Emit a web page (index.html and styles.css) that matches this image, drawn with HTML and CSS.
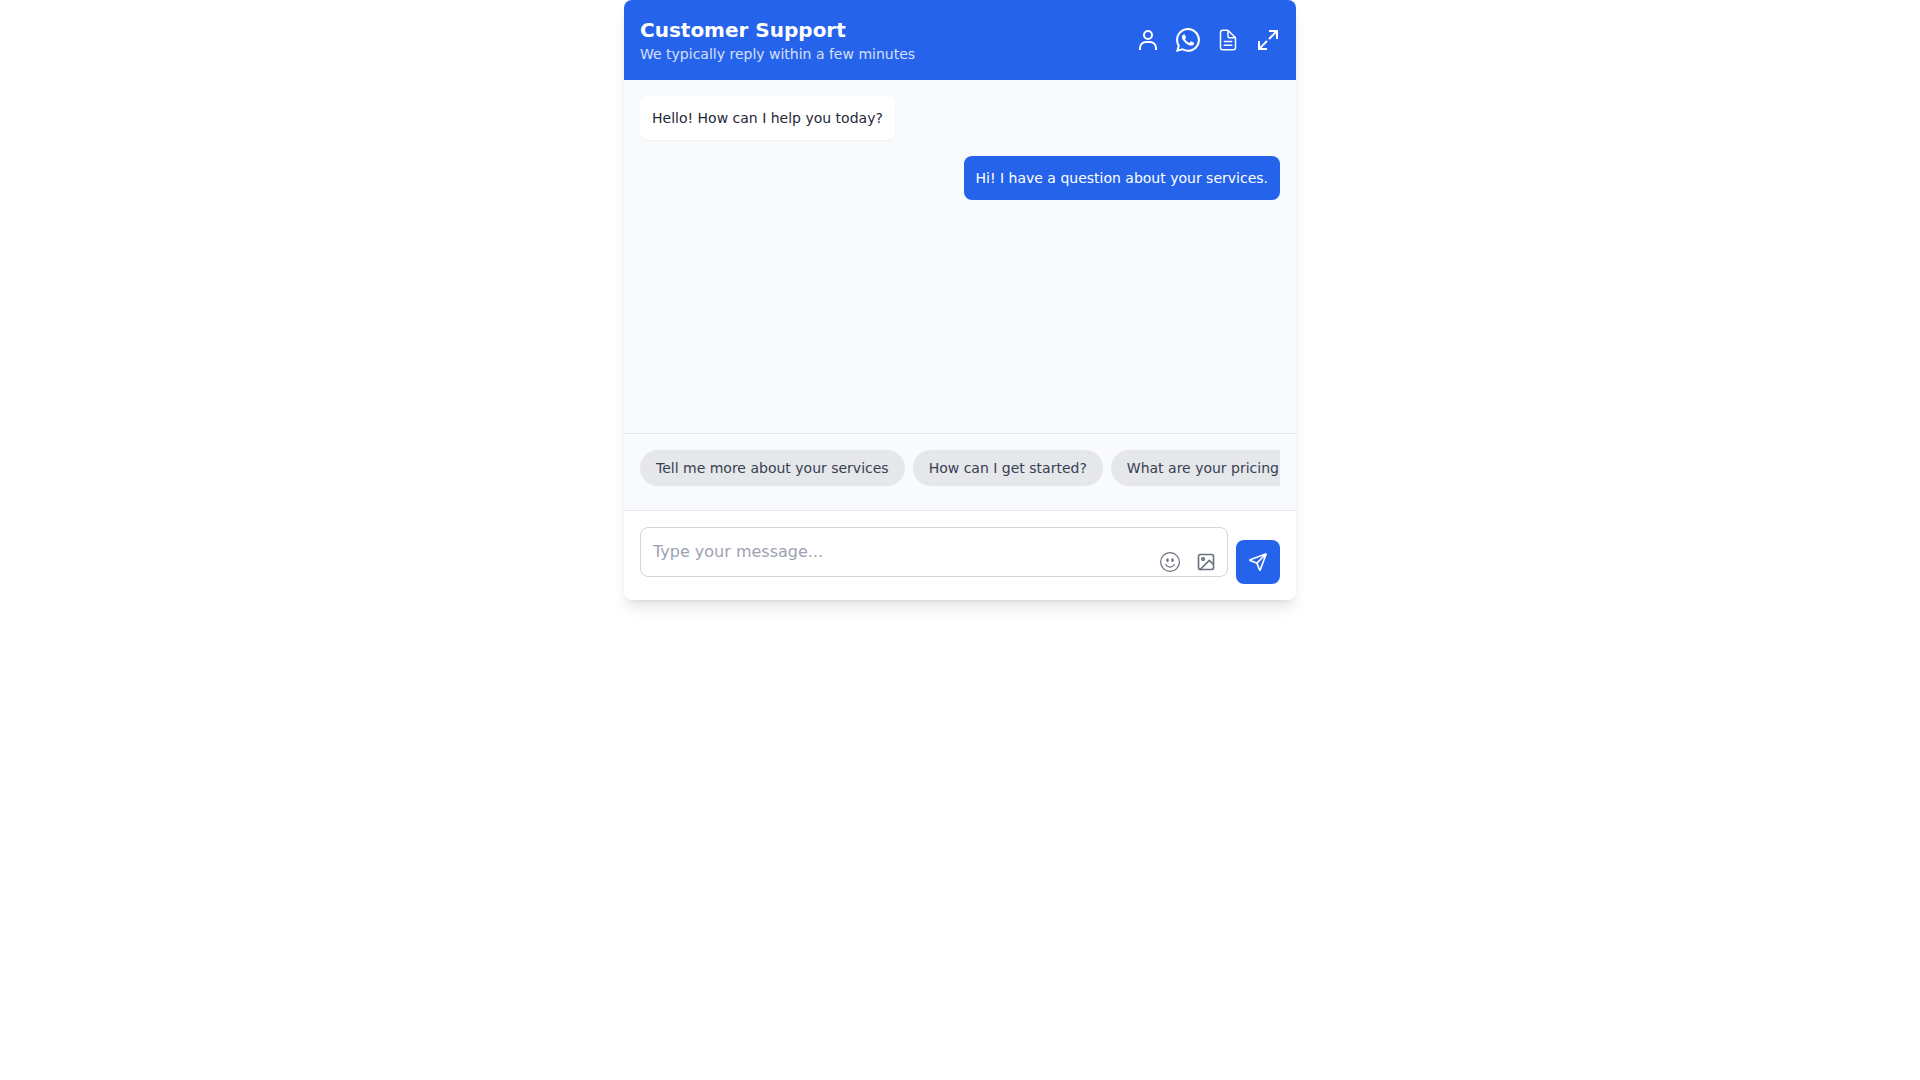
FILE: index.html
```
<!DOCTYPE html>
<html lang="en">
<head>
  <meta charset="UTF-8">
  <meta name="viewport" content="width=device-width, initial-scale=1.0">
  <title>Customer Support</title>
  <link rel="stylesheet" href="styles.css">
</head>
<body>
  <main class="chat">
    <header class="chat-header">
      <div>
        <h1>Customer Support</h1>
        <p>We typically reply within a few minutes</p>
      </div>
      <div class="header-actions">
        <button type="button" aria-label="Contact details">
          <svg viewBox="0 0 24 24" fill="currentColor"><path d="M12 2a5 5 0 1 0 5 5 5 5 0 0 0-5-5zm0 8a3 3 0 1 1 3-3 3 3 0 0 1-3 3zm9 12v-2a7 7 0 0 0-7-7h-4a7 7 0 0 0-7 7v2h2v-2a5 5 0 0 1 5-5h4a5 5 0 0 1 5 5v2z"/></svg>
        </button>
        <button type="button" aria-label="WhatsApp">
          <svg viewBox="0 0 16 16" fill="currentColor"><path d="M13.601 2.326A7.85 7.85 0 0 0 7.994 0C3.627 0 .068 3.558.064 7.926c0 1.399.366 2.76 1.057 3.965L0 16l4.204-1.102a7.9 7.9 0 0 0 3.79.965h.004c4.368 0 7.926-3.558 7.93-7.93A7.9 7.9 0 0 0 13.6 2.326zM7.994 14.521a6.6 6.6 0 0 1-3.356-.92l-.24-.144-2.494.654.666-2.433-.156-.251a6.56 6.56 0 0 1-1.007-3.505c0-3.626 2.957-6.584 6.591-6.584a6.56 6.56 0 0 1 4.66 1.931 6.557 6.557 0 0 1 1.928 4.66c-.004 3.639-2.961 6.592-6.592 6.592m3.615-4.934c-.197-.099-1.17-.578-1.353-.646-.182-.065-.315-.099-.445.099-.133.197-.513.646-.627.775-.114.133-.232.148-.43.05-.197-.1-.836-.308-1.592-.985-.59-.525-.985-1.175-1.103-1.372-.114-.198-.011-.304.088-.403.087-.088.197-.232.296-.346.1-.114.133-.198.198-.33.065-.134.034-.248-.015-.347-.05-.099-.445-1.076-.612-1.47-.16-.389-.323-.335-.445-.34-.114-.007-.247-.007-.38-.007a.73.73 0 0 0-.529.247c-.182.198-.691.677-.691 1.654s.71 1.916.81 2.049c.098.133 1.394 2.132 3.383 2.992.47.205.84.326 1.129.418.475.152.904.129 1.246.08.38-.058 1.171-.48 1.338-.943.164-.464.164-.86.114-.943-.049-.084-.182-.133-.38-.232"/></svg>
        </button>
        <button type="button" aria-label="Transcript">
          <svg viewBox="0 0 512 512" fill="none" stroke="currentColor" stroke-width="32" stroke-linecap="round" stroke-linejoin="round"><path d="M416 221.25V416a48 48 0 0 1-48 48H144a48 48 0 0 1-48-48V96a48 48 0 0 1 48-48h98.75a32 32 0 0 1 22.62 9.37l141.26 141.26a32 32 0 0 1 9.37 22.62z"/><path d="M256 56v120a32 32 0 0 0 32 32h120M176 288h160M176 368h160"/></svg>
        </button>
        <button type="button" aria-label="Expand">
          <svg viewBox="0 0 24 24" fill="none" stroke="currentColor" stroke-width="2"><path d="M13 3h8v8M21 3l-8 8M3 13v8h8M3 21l8-8"/></svg>
        </button>
      </div>
    </header>

    <section class="messages">
      <p class="message received">Hello! How can I help you today?</p>
      <p class="message sent">Hi! I have a question about your services.</p>
    </section>

    <section class="suggestions">
      <div class="suggestion-list">
        <button type="button">Tell me more about your services</button>
        <button type="button">How can I get started?</button>
        <button type="button">What are your pricing plans?</button>
      </div>
    </section>

    <form class="composer">
      <div class="field">
        <textarea rows="1" placeholder="Type your message..." aria-label="Message"></textarea>
        <div class="field-actions">
          <button type="button" aria-label="Add emoji">
            <svg viewBox="0 0 16 16" fill="currentColor"><path d="M8 15A7 7 0 1 1 8 1a7 7 0 0 1 0 14m0 1A8 8 0 1 0 8 0a8 8 0 0 0 0 16"/><path d="M4.285 9.567a.5.5 0 0 1 .683.183A3.5 3.5 0 0 0 8 11.5a3.5 3.5 0 0 0 3.032-1.75.5.5 0 1 1 .866.5A4.5 4.5 0 0 1 8 12.5a4.5 4.5 0 0 1-3.898-2.25.5.5 0 0 1 .183-.683M7 6.5C7 7.328 6.552 8 6 8s-1-.672-1-1.5S5.448 5 6 5s1 .672 1 1.5m4 0c0 .828-.448 1.5-1 1.5s-1-.672-1-1.5S9.448 5 10 5s1 .672 1 1.5"/></svg>
          </button>
          <button type="button" aria-label="Add image">
            <svg viewBox="0 0 24 24" fill="none" stroke="currentColor" stroke-width="2" stroke-linecap="round" stroke-linejoin="round"><rect x="3" y="3" width="18" height="18" rx="2"/><circle cx="8.5" cy="8.5" r="1.5"/><path d="M21 15l-5-5L5 21"/></svg>
          </button>
        </div>
      </div>
      <button type="submit" class="send" aria-label="Send">
        <svg viewBox="0 0 512 512" fill="none" stroke="currentColor" stroke-width="42" stroke-linecap="round" stroke-linejoin="round"><path d="M53.12 199.94l400-151.39a8 8 0 0 1 10.33 10.33l-151.39 400a8 8 0 0 1-15-.34l-67.4-166.09a16 16 0 0 0-10.11-10.11L53.46 215a8 8 0 0 1-.34-15.06zM460 52L227 285"/></svg>
      </button>
    </form>
  </main>
</body>
</html>
```

FILE: styles.css
```
* {
  box-sizing: border-box;
}
body, h1, p {
  margin: 0;
}
body {
  min-height: 100vh;
  font-family: "DejaVu Sans", sans-serif;
  font-size: 16px;
  line-height: 24px;
  background-color: #fff;
}
button {
  padding: 0;
  border: none;
  background: none;
  color: inherit;
  font: inherit;
  cursor: pointer;
}
svg {
  display: block;
  width: 20px;
  height: 20px;
}
.chat {
  display: flex;
  flex-direction: column;
  max-width: 672px;
  min-height: 600px;
  margin: 0 auto;
  background-color: #fff;
  border-radius: 8px;
  overflow: hidden;
  box-shadow: 0 10px 15px -3px rgba(0, 0, 0, 0.1), 0 4px 6px -4px rgba(0, 0, 0, 0.1);
}
.chat-header {
  display: flex;
  justify-content: space-between;
  align-items: center;
  padding: 16px;
  background-color: #2563eb;
  color: #fff;
}
.chat-header h1 {
  font-size: 20px;
  line-height: 28px;
  font-weight: 700;
}
.chat-header p {
  font-size: 14px;
  line-height: 20px;
  opacity: 0.8;
}
.header-actions {
  display: flex;
  gap: 16px;
}
.header-actions svg {
  width: 24px;
  height: 24px;
}
.messages {
  display: flex;
  flex: 1;
  flex-direction: column;
  gap: 16px;
  padding: 16px;
  background-color: #f9fafb;
}
.message {
  max-width: 80%;
  padding: 12px;
  border-radius: 8px;
  font-size: 14px;
  line-height: 20px;
}
.received {
  align-self: flex-start;
  background-color: #fff;
  color: #1f2937;
  box-shadow: 0 1px 2px rgba(0, 0, 0, 0.05);
}
.sent {
  align-self: flex-end;
  background-color: #2563eb;
  color: #fff;
}
.suggestions {
  padding: 16px;
  border-top: 1px solid #e5e7eb;
  background-color: #f9fafb;
}
.suggestion-list {
  display: flex;
  gap: 8px;
  padding-bottom: 8px;
  overflow-x: auto;
  scrollbar-width: none;
}
.suggestion-list button {
  flex-shrink: 0;
  padding: 8px 16px;
  border-radius: 18px;
  background-color: #e5e7eb;
  color: #374151;
  font-size: 14px;
  line-height: 20px;
  white-space: nowrap;
}
.composer {
  display: flex;
  align-items: flex-end;
  gap: 8px;
  padding: 16px;
  border-top: 1px solid #e5e7eb;
}
.field {
  position: relative;
  flex: 1;
}
.field textarea {
  width: 100%;
  padding: 12px;
  border: 1px solid #d1d5db;
  border-radius: 8px;
  color: #1f2937;
  font: inherit;
  resize: none;
}
.field textarea::placeholder {
  color: #9ca3af;
}
/* emoji and image buttons sit over the text box */
.field-actions {
  position: absolute;
  right: 12px;
  bottom: 12px;
  display: flex;
  gap: 16px;
  color: #6b7280;
}
.send {
  padding: 12px;
  border-radius: 8px;
  background-color: #2563eb;
  color: #fff;
}
```
